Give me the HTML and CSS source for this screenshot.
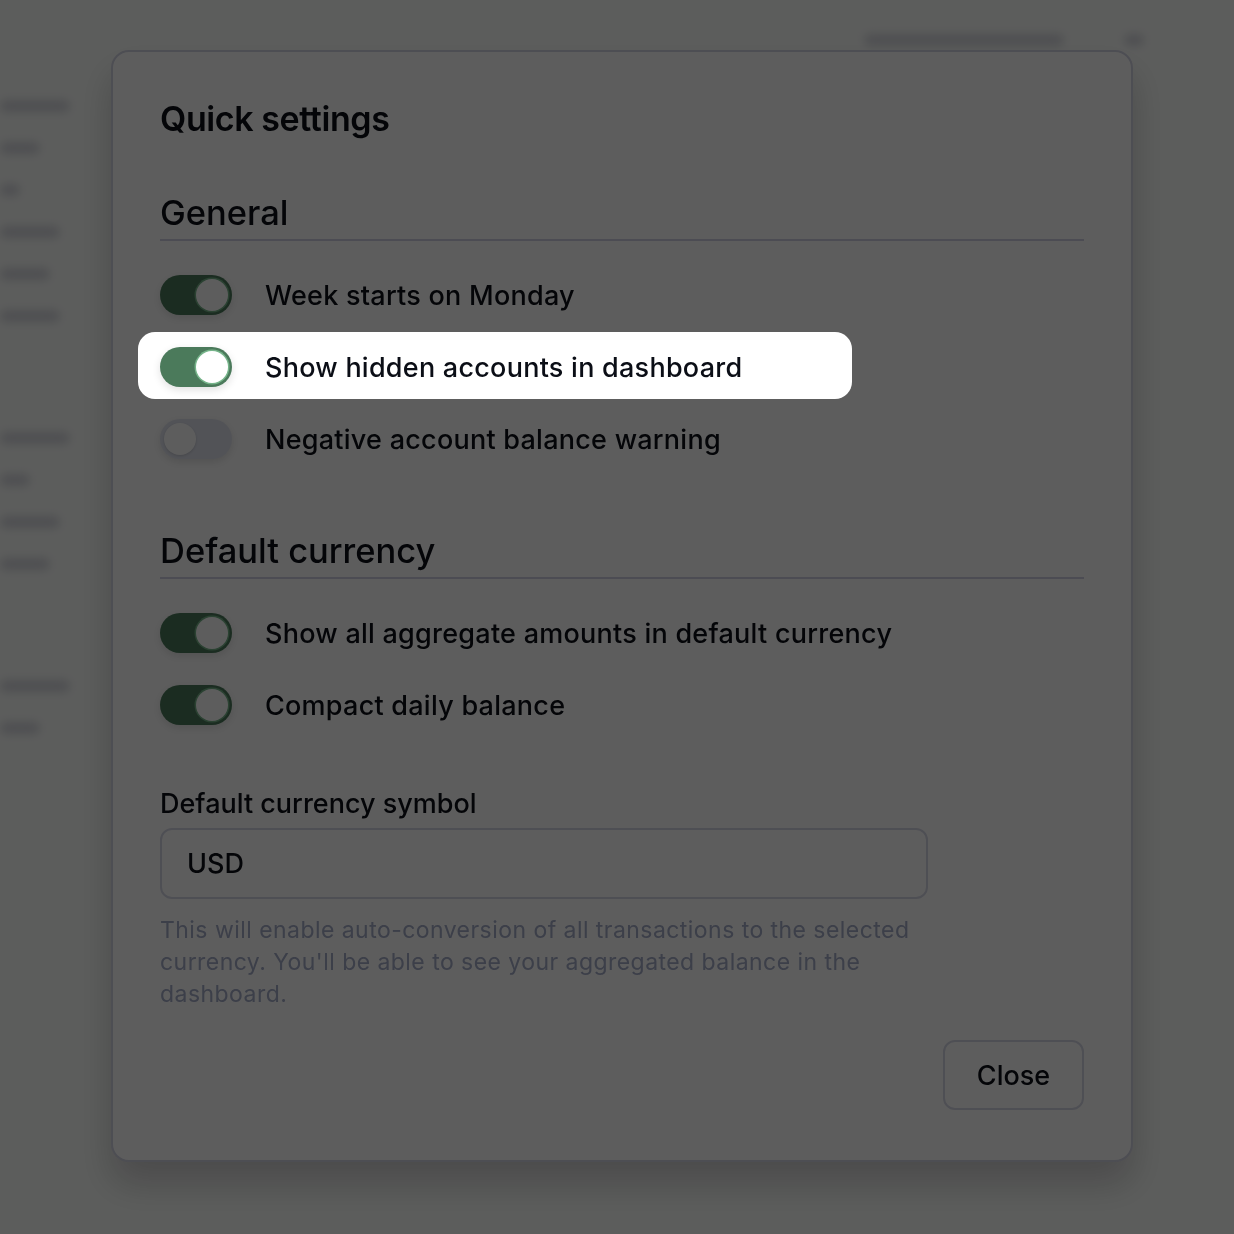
FILE: index.html
```html
<!DOCTYPE html>
<html lang="en">
<head>
<meta charset="utf-8">
<title>Quick settings</title>
<link rel="stylesheet" href="styles.css">
</head>
<body>
<div class="app">
  <aside class="side">
    <div class="ghost w70"></div>
    <div class="ghost w40"></div>
    <div class="ghost w20"></div>
    <div class="ghost w60"></div>
    <div class="ghost w50"></div>
    <div class="ghost w60"></div>
    <div class="ghost gap w70"></div>
    <div class="ghost w30"></div>
    <div class="ghost w60"></div>
    <div class="ghost w50"></div>
    <div class="ghost gap w70"></div>
    <div class="ghost w40"></div>
  </aside>
  <main class="main">
    <div class="topbar"><div class="ghost w200"></div><div class="ghost w20"></div></div>
  </main>
</div>

<div class="layer">
  <section class="modal">
    <h1 class="title">Quick settings</h1>

    <h2 class="section-title">General</h2>
    <div class="rows">
      <div class="row"><span class="switch on"><span class="knob"></span></span><span class="label">Week starts on Monday</span></div>
      <div class="row spotlight"><span class="switch on"><span class="knob"></span></span><span class="label">Show hidden accounts in dashboard</span></div>
      <div class="row"><span class="switch off"><span class="knob"></span></span><span class="label">Negative account balance warning</span></div>
    </div>

    <h2 class="section-title second">Default currency</h2>
    <div class="rows">
      <div class="row"><span class="switch on"><span class="knob"></span></span><span class="label">Show all aggregate amounts in default currency</span></div>
      <div class="row"><span class="switch on"><span class="knob"></span></span><span class="label">Compact daily balance</span></div>
    </div>

    <div class="field">
      <label class="field-label">Default currency symbol</label>
      <div class="input">USD</div>
      <p class="help">This will enable auto-conversion of all transactions to the selected currency. You'll be able to see your aggregated balance in the dashboard.</p>
    </div>

    <div class="actions"><button class="btn">Close</button></div>
  </section>
  <div class="dim"></div>
</div>
</body>
</html>
```

FILE: styles.css
```css
* { box-sizing: border-box; }
html, body { margin: 0; padding: 0; }
body {
  width: 1234px;
  height: 1234px;
  overflow: hidden;
  background: #fdfffd;
  font-family: Inter, "Noto Sans", sans-serif;
  color: #0b0e16;
}

/* background app (blurred) */
.app {
  display: flex;
  height: 1234px;
  filter: blur(5px);
}
.side {
  width: 110px;
  padding: 100px 0 0 0;
  display: flex;
  flex-direction: column;
  gap: 30px;
}
.ghost { height: 12px; border-radius: 6px; background: #d6d8de; }
.ghost.gap { margin-top: 80px; }
.w20 { width: 20px; } .w30 { width: 30px; } .w40 { width: 40px; }
.w50 { width: 50px; } .w60 { width: 60px; } .w70 { width: 70px; }
.w200 { width: 200px; }
.main { flex: 1; }
.topbar { display: flex; justify-content: flex-end; gap: 60px; padding: 34px 90px 0 0; }

/* modal layer */
.layer {
  position: fixed;
  inset: 0;
  padding: 50px 0 0 111px;
}
.dim {
  position: absolute;
  inset: 0;
  background: rgba(0, 0, 0, 0.635);
  z-index: 1;
}
.modal {
  width: 1022px;
  background: #fff;
  border: 2px solid #d4d5e4;
  border-radius: 18px;
  padding: 39px 47px 50px 47px;
  box-shadow: 0 22px 36px rgba(0, 0, 0, 0.2);
}
.title {
  margin: 0;
  font-size: 34px;
  line-height: 56px;
  font-weight: 600;
  letter-spacing: -0.4px;
}
.section-title {
  margin: 44px 0 0;
  font-size: 34.5px;
  font-weight: 500;
  line-height: 44px;
  padding-bottom: 4px;
  border-bottom: 2px solid #cfd1e3;
}
.section-title.second { margin-top: 70px; }
.rows {
  display: flex;
  flex-direction: column;
  gap: 32px;
  margin-top: 34px;
}
.row {
  display: flex;
  align-items: center;
  gap: 33px;
  height: 40px;
}
.label {
  font-size: 27px;
  font-weight: 500;
  letter-spacing: 0.25px;
}
.spotlight {
  position: relative;
  z-index: 2;
  align-self: flex-start;
  height: 67px;
  margin: -15px 0 -12px -22px;
  padding: 3px 110px 0 22px;
  background: #fff;
  border-radius: 17px;
}
.switch {
  flex: none;
  position: relative;
  width: 72px;
  height: 40px;
  border-radius: 20px;
  display: flex;
  align-items: center;
  padding: 4px;
  box-shadow: 0 3px 8px rgba(0, 0, 0, 0.12);
}
.switch.on { background: #4b7a5b; justify-content: flex-end; }
.switch.off { background: #e1e4ef; justify-content: flex-start; }
.knob {
  width: 32px;
  height: 32px;
  border-radius: 50%;
  background: #fff;
}
.switch.on .knob { box-shadow: 0 0 0 1.5px #76b48a; }
.switch.off .knob { box-shadow: 0 1px 3px rgba(0, 0, 0, 0.15); }

.field { margin-top: 60px; width: 768px; }
.field-label {
  display: block;
  font-size: 27px;
  font-weight: 500;
  line-height: 38px;
}
.input {
  margin-top: 5px;
  height: 71px;
  border: 2px solid #d7d8e6;
  border-radius: 12px;
  padding: 0 25px;
  display: flex;
  align-items: center;
  font-size: 27px;
  font-weight: 500;
}
.help {
  margin: 15px 0 0;
  font-size: 23px;
  line-height: 32px;
  color: #a4acc8;
  letter-spacing: 0.45px;
}
.actions {
  display: flex;
  justify-content: flex-end;
  margin-top: 30px;
}
.btn {
  width: 141px;
  height: 70px;
  background: #fff;
  border: 2px solid #d7d8e6;
  border-radius: 12px;
  font-family: inherit;
  font-size: 27px;
  font-weight: 500;
  color: #0b0e16;
}
```
